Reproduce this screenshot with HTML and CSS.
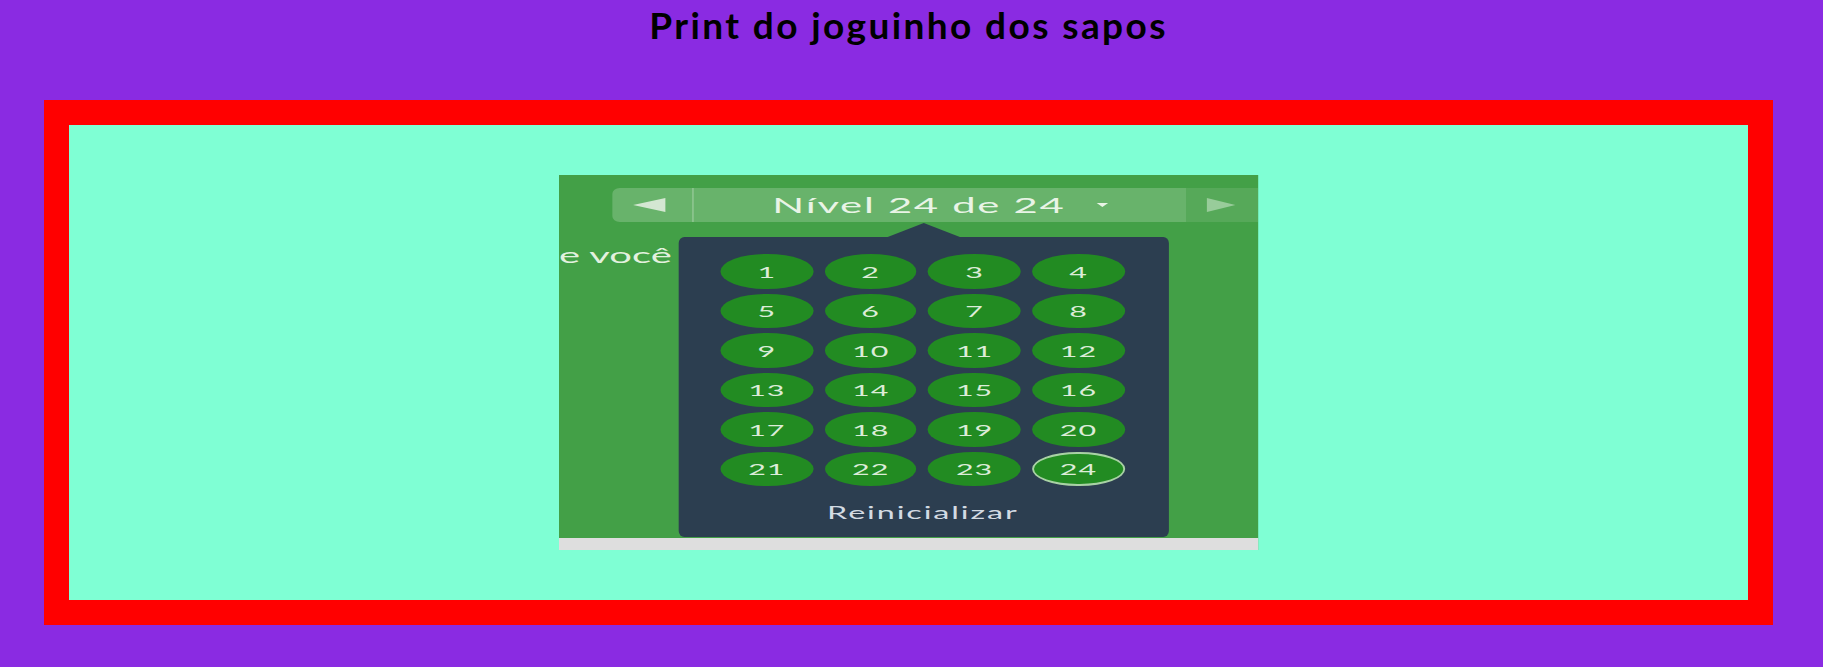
FILE: index.html
```html
<!DOCTYPE html>
<html lang="pt-BR">
<head>
<meta charset="utf-8">
<title>Print do joguinho dos sapos</title>
<link rel="stylesheet" href="styles.css">
</head>
<body>
<div class="page">
  <h1 class="title">Print do joguinho dos sapos</h1>
  <section class="frame">
    <div class="shot">
      <div class="canvas">
        <div class="lvlbar">
          <div class="seg prev"><span class="arrow-left"></span></div>
          <div class="seg mid"><span class="lvl-text">Nível 24 de 24</span><span class="caret"></span></div>
          <div class="seg next"><span class="arrow-right"></span></div>
        </div>
        <p class="intro">e você</p>
        <div class="dropdown">
          <div class="levels">
            <span class="lvl">1</span><span class="lvl">2</span><span class="lvl">3</span><span class="lvl">4</span>
            <span class="lvl">5</span><span class="lvl">6</span><span class="lvl">7</span><span class="lvl">8</span>
            <span class="lvl">9</span><span class="lvl">10</span><span class="lvl">11</span><span class="lvl">12</span>
            <span class="lvl">13</span><span class="lvl">14</span><span class="lvl">15</span><span class="lvl">16</span>
            <span class="lvl">17</span><span class="lvl">18</span><span class="lvl">19</span><span class="lvl">20</span>
            <span class="lvl">21</span><span class="lvl">22</span><span class="lvl">23</span><span class="lvl current">24</span>
          </div>
          <div class="reset">Reinicializar</div>
        </div>
        <div class="gray-band"></div>
      </div>
    </div>
  </section>
</div>
</body>
</html>
```

FILE: styles.css
```css
html, body {
  margin: 0;
  padding: 0;
}

body {
  background: #8a2be2;
  font-family: "Lato", "Open Sans", sans-serif;
}

.page {
  padding: 3px 50px 0 44px;
}

.title {
  margin: 0 0 53px;
  text-align: center;
  font-family: "Lato", sans-serif;
  font-weight: 700;
  font-size: 37px;
  line-height: 1.2;
  letter-spacing: 2.4px;
  color: #000;
}

.frame {
  border: 25px solid #ff0000;
  background: #7fffd4;
  padding: 50px 0;
  display: flex;
  justify-content: center;
}

.shot {
  width: 700px;
  height: 375px;
  overflow: hidden;
  position: relative;
}

.canvas {
  width: 368.42px;
  height: 375px;
  transform: scaleX(1.9);
  transform-origin: 0 0;
  background: #43a047;
  position: relative;
  display: flex;
  flex-direction: column;
}

.lvlbar {
  margin: 13px 0 0 28.4px;
  height: 34px;
  display: flex;
  flex: none;
  border-radius: 4px 0 0 4px / 6px 0 0 6px;
  overflow: hidden;
}

.seg {
  display: flex;
  align-items: center;
  height: 100%;
}

.prev {
  width: 41.6px;
  flex: none;
  background: rgba(255, 255, 255, 0.2);
  border-right: 1px solid rgba(255, 255, 255, 0.22);
}

.arrow-left {
  margin-left: 11px;
  width: 0;
  height: 0;
  border-top: 7.2px solid transparent;
  border-bottom: 7.2px solid transparent;
  border-right: 17px solid #d4e7d2;
}

.mid {
  width: 258.9px;
  flex: none;
  justify-content: center;
  background: rgba(255, 255, 255, 0.2);
}

.lvl-text {
  font-size: 22px;
  letter-spacing: 0.9px;
  color: #e9f4e6;
  padding-bottom: 2px;
}

.caret {
  margin-left: 16px;
  width: 0;
  height: 0;
  border-top: 4px solid #e9f4e6;
  border-left: 3.4px solid transparent;
  border-right: 3.4px solid transparent;
}

.next {
  flex: 1;
  background: rgba(255, 255, 255, 0.1);
}

.arrow-right {
  margin-left: 11.6px;
  width: 0;
  height: 0;
  border-top: 7.2px solid transparent;
  border-bottom: 7.2px solid transparent;
  border-left: 15.8px solid #98cc9a;
}

.intro {
  position: absolute;
  left: 0;
  top: 69px;
  margin: 0;
  font-size: 21px;
  line-height: 21px;
  color: #e3f1df;
  white-space: nowrap;
}

.dropdown {
  position: absolute;
  left: 63.2px;
  top: 62px;
  width: 257.9px;
  height: 300px;
  box-sizing: border-box;
  background: #2c3e50;
  border-radius: 3px / 6px;
  padding: 17px 23.2px 0 21.9px;
}

.dropdown::before {
  content: "";
  position: absolute;
  top: -14px;
  left: 50%;
  margin-left: -19.2px;
  border-bottom: 14px solid #2c3e50;
  border-left: 19.2px solid transparent;
  border-right: 19.2px solid transparent;
}

.levels {
  display: grid;
  grid-template-columns: repeat(4, 48.5px);
  grid-auto-rows: 34.5px;
  column-gap: 6.2px;
  row-gap: 5px;
}

.lvl {
  display: flex;
  align-items: center;
  justify-content: center;
  border-radius: 50%;
  background: #228b22;
  color: #dcecd8;
  font-size: 16px;
  letter-spacing: 0.5px;
  padding-bottom: 1px;
  box-sizing: border-box;
}

.lvl.current {
  border-style: solid;
  border-color: #a9d2a5;
  border-width: 2px 1.1px;
}

.reset {
  margin-top: 18px;
  text-align: center;
  font-size: 17px;
  line-height: 17px;
  letter-spacing: 1px;
  color: #d3dbe3;
}

.gray-band {
  margin-top: auto;
  height: 12.3px;
  background: #dedede;
  flex: none;
}
```
